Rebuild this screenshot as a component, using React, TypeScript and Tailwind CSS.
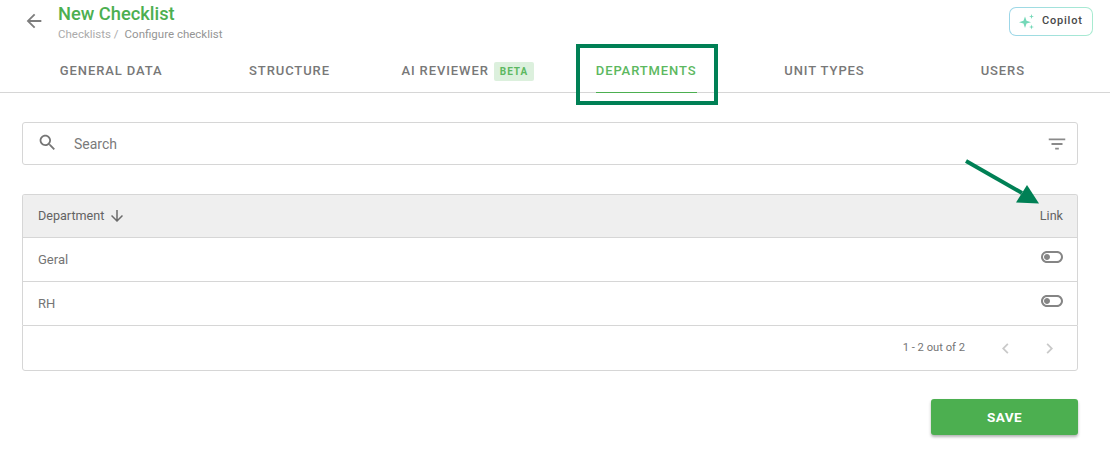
import React from "react";

const Icon = ({ d, className }: { d: string; className: string }) => (
  <svg viewBox="0 0 24 24" className={className} fill="currentColor">
    <path d={d} />
  </svg>
);

const toggle =
  "M17 6H7c-3.31 0-6 2.69-6 6s2.69 6 6 6h10c3.31 0 6-2.69 6-6s-2.69-6-6-6zm0 10H7c-2.21 0-4-1.79-4-4s1.79-4 4-4h10c2.21 0 4 1.79 4 4s-1.79 4-4 4zM7 9c-1.66 0-3 1.34-3 3s1.34 3 3 3 3-1.34 3-3-1.34-3-3-3z";

const Tab = ({ label, active, beta }: { label: string; active?: boolean; beta?: boolean }) => (
  <div className="flex flex-1 items-start justify-center">
    <div
      className={`flex h-[44px] items-center gap-[5px] text-[13px] font-medium tracking-[0.9px] ${
        active ? "border-b border-b-[#4caf50] text-[#5cb860]" : "text-[#787878]"
      }`}
    >
      {label}
      {beta && (
        <span className="rounded-[2px] bg-[#dcf0dd] px-[6px] py-[2px] text-[10px] leading-[15px] font-bold tracking-[1px] text-[#5cb860]">
          BETA
        </span>
      )}
    </div>
  </div>
);

const Row = ({ label }: { label: string }) => (
  <div className="flex h-[44px] items-center justify-between border-t border-[#d6d6d6] pr-[13px] pl-[15px] text-[13px] text-[#757575]">
    <span>{label}</span>
    <Icon d={toggle} className="h-[24px] w-[24px] -translate-y-[3px] text-[#858585]" />
  </div>
);

export default function App() {
  return (
    <div className="relative h-[462px] w-[1110px] overflow-hidden bg-white font-['Roboto',sans-serif]">
      <header className="border-b border-[#d6d6d6]">
        <div className="flex h-[49px] items-start justify-between pr-[17px] pl-[23px]">
          <div className="flex">
            <Icon
              d="M20 11H7.83l5.59-5.59L12 4l-8 8 8 8 1.41-1.41L7.83 13H20v-2z"
              className="mt-[10px] h-[22px] w-[22px] text-[#7d7d7d]"
            />
            <div className="ml-[13px] pt-[2px]">
              <div className="text-[18.3px] leading-[24px] font-medium text-[#4caf50]">New Checklist</div>
              <div className="mt-[1px] text-[11.5px] leading-[14px] text-[#ababab]">
                Checklists /<span className="ml-[6px] text-[#959595]">Configure checklist</span>
              </div>
            </div>
          </div>
          <div className="mt-[7px] h-[29px] w-[84px] rounded-[7px] bg-gradient-to-r from-[#9cd6e8] to-[#a8ebd0] p-px">
            <div className="flex h-full items-center gap-[7px] rounded-[6px] bg-white pl-[9px] text-[11px] font-medium tracking-[0.8px] text-[#484848]">
              <svg viewBox="0 0 16 16" className="h-[16px] w-[16px] text-[#74d8b8]" fill="currentColor">
                <path d="M6 2.500 7.500 6.800 12 8.200 7.500 9.600 6 14 4.500 9.600 0 8.200 4.500 6.800z" />
                <path d="M12.500 0l.6 1.900 1.900.6-1.900.6-.6 1.900-.6-1.900-1.900-.6 1.900-.6z" />
                <path d="M12.500 10.500l.6 1.900 1.900.6-1.900.6-.6 1.900-.6-1.900-1.900-.6 1.900-.6z" />
              </svg>
              Copilot
            </div>
          </div>
        </div>
        <nav className="flex h-[43px] pr-[18px] pl-[22px]">
          <Tab label="GENERAL DATA" />
          <Tab label="STRUCTURE" />
          <Tab label="AI REVIEWER" beta />
          <Tab label="DEPARTMENTS" active />
          <Tab label="UNIT TYPES" />
          <Tab label="USERS" />
        </nav>
      </header>

      <main className="pt-[29px] pr-[32px] pl-[22px]">
        <div className="flex h-[43px] items-center rounded-[3px] border border-[#d6d6d6] pr-[9px] pl-[14px]">
          <Icon
            d="M15.5 14h-.79l-.28-.27C15.41 12.59 16 11.11 16 9.5 16 5.91 13.09 3 9.5 3S3 5.91 3 9.5 5.91 16 9.5 16c1.61 0 3.09-.59 4.23-1.57l.27.28v.79l5 4.99L20.49 19l-4.99-5zm-6 0C7.01 14 5 11.99 5 9.5S7.01 5 9.5 5 14 7.01 14 9.5 11.99 14 9.5 14z"
            className="h-[21px] w-[21px] -translate-y-[1px] text-[#757575]"
          />
          <span className="ml-[16px] flex-1 pt-[1px] text-[14px] text-[#7a7a7a]">Search</span>
          <Icon d="M10 18h4v-2h-4v2zM3 6v2h18V6H3zm3 7h12v-2H6v2z" className="h-[22px] w-[22px] text-[#8a8a8a]" />
        </div>

        <div className="mt-[29px] overflow-hidden rounded-t-[3px] border-x border-t border-[#d6d6d6]">
          <div className="flex h-[42px] items-center justify-between bg-[#efefef] pr-[14px] pl-[15px] text-[12.6px] text-[#636363]">
            <span className="flex items-center gap-[4px]">
              Department
              <Icon
                d="M20 12l-1.41-1.41L13 16.17V4h-2v12.170l-5.58-5.590L4 12l8 8 8-8z"
                className="h-[18px] w-[18px] text-[#6b6b6b]"
              />
            </span>
            <span>Link</span>
          </div>
          <Row label="Geral" />
          <Row label="RH" />
        </div>
        <div className="flex h-[46px] items-center justify-end rounded-b-[3px] border border-[#d6d6d6] pr-[17px] text-[11.2px] text-[#757575]">
          <span>1 - 2 out of 2</span>
          <Icon
            d="M15.41 7.41L14 6l-6 6 6 6 1.41-1.41L10.83 12z"
            className="ml-[30px] h-[21px] w-[21px] text-[#c9c9c9]"
          />
          <Icon
            d="M8.59 16.59L10 18l6-6-6-6-1.410 1.410L13.170 12z"
            className="ml-[23px] h-[21px] w-[21px] text-[#c9c9c9]"
          />
        </div>
        <div className="mt-[28px] flex justify-end">
          <button className="h-[36px] w-[147px] rounded-[3px] bg-[#4caf50] text-[13.5px] font-bold tracking-[0.4px] text-white shadow-[0_2px_3px_rgba(0,0,0,0.3)]">
            SAVE
          </button>
        </div>
      </main>

      <div className="absolute top-[44px] left-[576px] h-[61px] w-[142px] border-[4px] border-[#008055]" />
      <svg className="absolute top-[155px] left-[960px] h-[50px] w-[85px]" viewBox="0 0 85 50">
        <line x1="6" y1="6" x2="62" y2="38" stroke="#008055" strokeWidth="4" />
        <polygon points="67,30 56,47.500 79,48.500" fill="#008055" />
      </svg>
    </div>
  );
}
